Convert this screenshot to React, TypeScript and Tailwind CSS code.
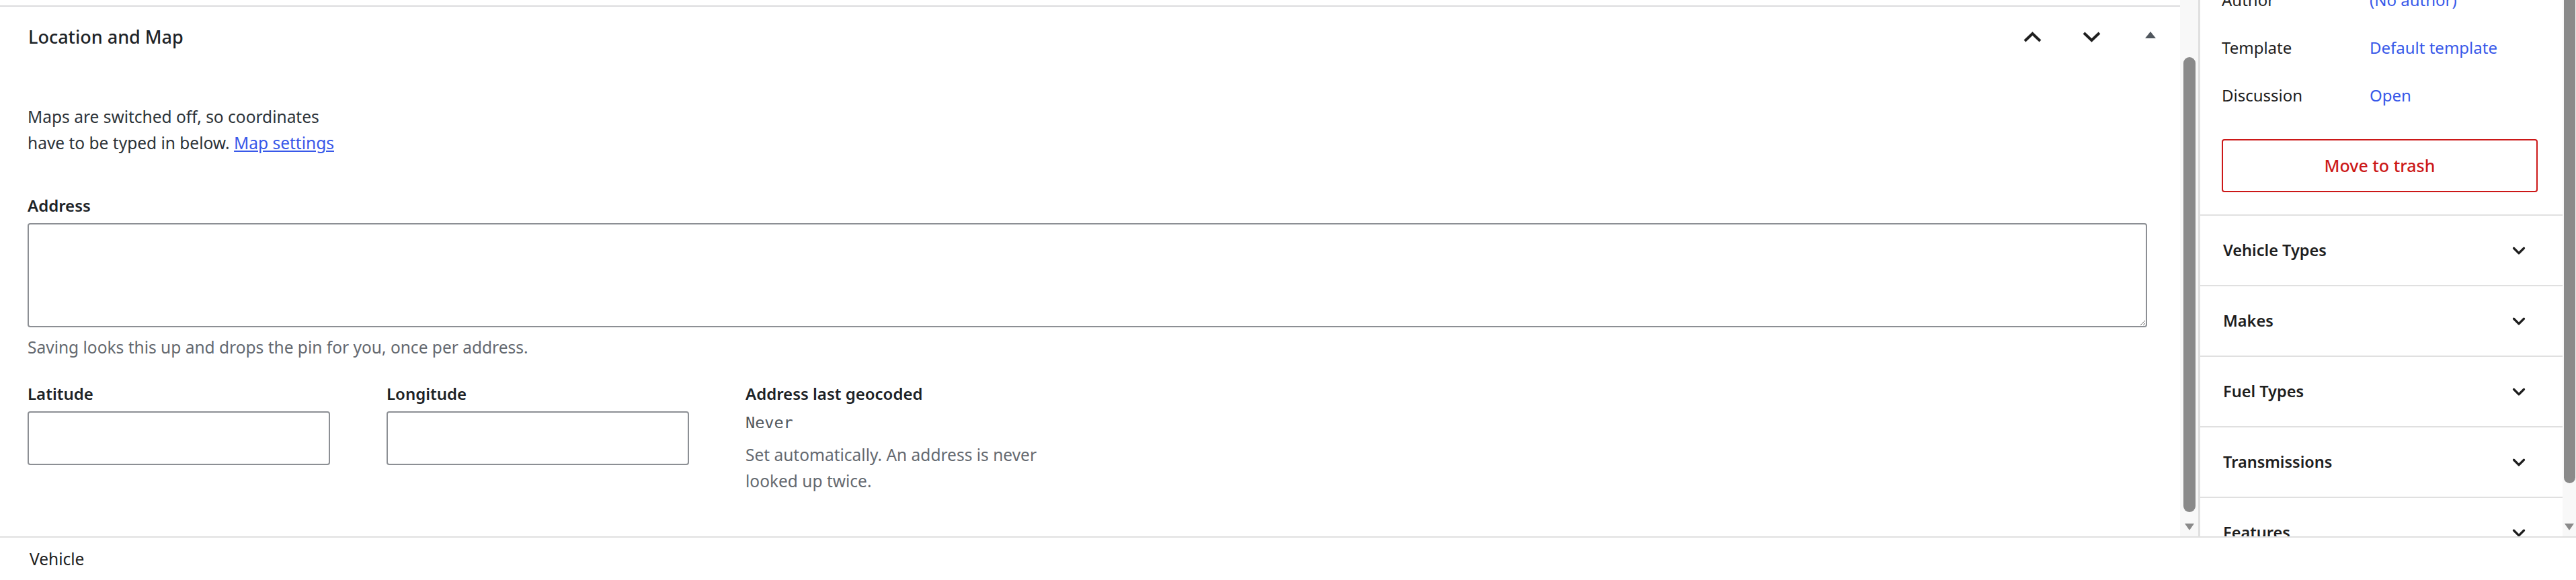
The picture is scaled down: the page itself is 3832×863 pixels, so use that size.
import { ChevronDown } from "lucide-react"

const panels = ["Vehicle Types", "Makes", "Fuel Types", "Transmissions", "Features"]

const meta = [
  { label: "Author", value: "(No author)" },
  { label: "Template", value: "Default template" },
  { label: "Discussion", value: "Open" },
]

function Chevron({ up }: { up?: boolean }) {
  return (
    <svg width="27" height="16" viewBox="0 0 27 16" fill="none">
      <polyline
        points={up ? "2,14 13.5,3 25,14" : "2,2 13.5,13 25,2"}
        stroke="#1e1e1e"
        strokeWidth="4"
      />
    </svg>
  )
}

function DownArrow() {
  return (
    <svg width="16" height="12" viewBox="0 0 16 12">
      <polygon points="1,1 15,1 8,11" fill="#8a8a8a" />
    </svg>
  )
}

function MetaBox() {
  return (
    <section className="border-t-2 border-[#dcdcde]">
      <div className="flex h-[90px] items-center">
        <h2 className="flex-1 pl-[42px] text-[27px] font-medium text-[#1d2327]">Location and Map</h2>
        <div className="flex">
          <button className="flex w-[88px] justify-center"><Chevron up /></button>
          <button className="flex w-[88px] justify-center"><Chevron /></button>
          <button className="flex w-[88px] justify-center pb-[6px]">
            <svg width="16" height="10" viewBox="0 0 16 10">
              <polygon points="8,0 16,10 0,10" fill="#50575e" />
            </svg>
          </button>
        </div>
      </div>

      <div className="pl-[41px] pr-[49px] pt-[54px] text-[24.5px] leading-[39px] text-[#2c3338]">
        <p>
          Maps are switched off, so coordinates
          <br />
          have to be typed in below.{" "}
          <a className="text-[#3858e9] underline">Map settings</a>
        </p>

        <label className="mt-[54px] block text-[24px] font-semibold text-[#1d2327]">Address</label>
        <textarea className="mt-[7px] block h-[155px] w-full rounded-[4px] border-2 border-[#8c8f94] bg-white" />
        <p className="mt-[10px] text-[#646970]">Saving looks this up and drops the pin for you, once per address.</p>

        <div className="mt-[30px] flex gap-[84px]">
          <div className="w-[450px]">
            <label className="block text-[24px] font-semibold text-[#1d2327]">Latitude</label>
            <input className="mt-[7px] block h-[80px] w-full rounded-[4px] border-2 border-[#8c8f94]" />
          </div>
          <div className="w-[450px]">
            <label className="block text-[24px] font-semibold text-[#1d2327]">Longitude</label>
            <input className="mt-[7px] block h-[80px] w-full rounded-[4px] border-2 border-[#8c8f94]" />
          </div>
          <div>
            <div className="text-[24px] font-semibold text-[#1d2327]">Address last geocoded</div>
            <div className="mt-[5px] font-['DejaVu_Sans_Mono',monospace] text-[23.5px] text-[#50575e]">Never</div>
            <p className="mt-[8px] text-[#646970]">
              Set automatically. An address is never
              <br />
              looked up twice.
            </p>
          </div>
        </div>
      </div>
    </section>
  )
}

function Sidebar() {
  return (
    <aside className="flex w-[562px] border-l-[3px] border-[#e0e0e0]">
      <div className="flex-1 overflow-hidden text-[24px] text-[#1e1e1e]">
        <div className="-mt-[36px] pl-[32px] pr-[37px]">
          {meta.map((m) => (
            <div key={m.label} className="flex h-[71px] items-center">
              <span className="w-[220px]">{m.label}</span>
              <a className="text-[#3858e9]">{m.value}</a>
            </div>
          ))}
          <button className="mt-[30px] h-[79px] w-full rounded-[4px] border-2 border-[#cc1818] text-[25px] font-medium text-[#cc1818]">
            Move to trash
          </button>
        </div>
        <div className="mt-[33px]">
          {panels.map((p) => (
            <div key={p} className="flex h-[105px] items-center border-t-2 border-[#e0e0e0] pl-[34px] pr-[50px]">
              <span className="flex-1 text-[23.5px] font-semibold">{p}</span>
              <ChevronDown size={30} strokeWidth={2.6} color="#1e1e1e" />
            </div>
          ))}
        </div>
      </div>
      <div className="flex w-[20px] flex-col items-center bg-[#f8f8f8]">
        <div className="h-[719px] w-[17px] rounded-b-full bg-[#8a8a8a]" />
        <div className="mt-[59px]"><DownArrow /></div>
      </div>
    </aside>
  )
}

export default function App() {
  return (
    <div className="flex h-[863px] w-[3832px] flex-col overflow-hidden bg-white font-['Noto_Sans',sans-serif]">
      <div className="flex h-[798px] min-h-0">
        <main className="min-w-0 flex-1 pt-[8px]">
          <MetaBox />
        </main>
        <div className="flex w-[27px] flex-col items-center bg-[#f8f8f8] pt-[85px]">
          <div className="h-[677px] w-[18px] rounded-full bg-[#8a8a8a]" />
          <div className="mt-[16px]"><DownArrow /></div>
        </div>
        <Sidebar />
      </div>
      <footer className="flex h-[65px] items-center border-t-2 border-[#e0e0e0] pl-[44px] pt-[2px] text-[24.5px] text-[#1e1e1e]">
        Vehicle
      </footer>
    </div>
  )
}
